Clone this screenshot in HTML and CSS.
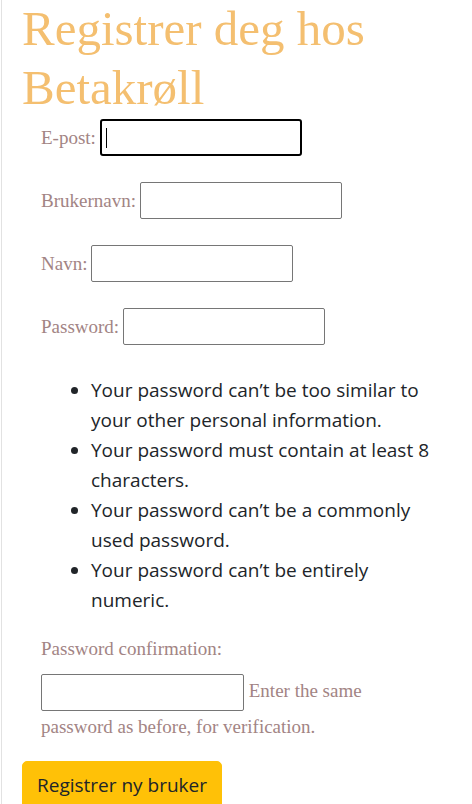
FILE: index.html
```html
<!DOCTYPE html>
<html lang="no">
<head>
<meta charset="utf-8">
<title>Registrer deg hos Betakrøll</title>
<link rel="stylesheet" href="styles.css">
</head>
<body>
<div class="page">
  <h1 class="title">Registrer deg hos Betakrøll</h1>
  <form class="form">
    <div class="fields">
      <p class="row"><label class="label" for="email">E-post:</label> <span class="focus-wrap"><input class="input input-focused" id="email" type="email"><span class="caret"></span></span></p>
      <p class="row"><label class="label" for="username">Brukernavn:</label> <input class="input" id="username" type="text"></p>
      <p class="row"><label class="label" for="name">Navn:</label> <input class="input" id="name" type="text"></p>
      <p class="row"><label class="label" for="pw1">Password:</label> <input class="input" id="pw1" type="password"></p>
      <ul class="rules">
        <li>Your password can’t be too similar to your other personal information.</li>
        <li>Your password must contain at least 8 characters.</li>
        <li>Your password can’t be a commonly used password.</li>
        <li>Your password can’t be entirely numeric.</li>
      </ul>
      <p class="row-label"><label class="label" for="pw2">Password confirmation:</label></p>
      <p class="confirm"><input class="input input-wide" id="pw2" type="password"> <span class="help">Enter the same password as before, for verification.</span></p>
    </div>
    <button class="btn" type="button">Registrer ny bruker</button>
  </form>
</div>
</body>
</html>
```
FILE: styles.css
```css
html, body {
  margin: 0;
  padding: 0;
  background: #fff;
}
body {
  font-family: "Liberation Serif", "DejaVu Serif", serif;
  overflow: hidden;
}
.page {
  margin-left: 1px;
  border-left: 1px solid #e2e2e2;
  min-height: 804px;
  padding-left: 20px;
  padding-right: 30px;
  box-sizing: border-box;
}
.title {
  margin: -1px 0 0 0;
  font-family: "Liberation Serif", serif;
  font-weight: 400;
  font-size: 49px;
  line-height: 59px;
  color: #f4bf70;
}
.form {
  margin: 0;
}
.fields {
  padding-left: 19px;
}
.row {
  margin: 2px 0 0 0;
  display: flex;
  align-items: center;
  gap: 4px;
  height: 37px;
}
.row + .row {
  margin-top: 26px;
}
.label {
  font-size: 19px;
  color: #a28484;
}
.input {
  width: 202px;
  height: 37px;
  box-sizing: border-box;
  border: 1px solid #767676;
  border-radius: 2px;
  margin: 0;
  padding: 0 4px;
  background: #fff;
  font: inherit;
}
.focus-wrap {
  position: relative;
  display: inline-block;
  height: 37px;
}
.input-focused {
  border: 2px solid #000;
  border-radius: 3px;
  outline: none;
}
.caret {
  position: absolute;
  left: 6px;
  top: 9px;
  width: 1px;
  height: 20px;
  background: #000;
}
.rules {
  margin: 30px 0 0 0;
  padding-left: 50px;
  font-family: "Open Sans", "Noto Sans", sans-serif;
  font-size: 19px;
  line-height: 30px;
  color: #212529;
}
.row-label {
  margin: 20px 0 0 0;
  line-height: 28px;
}
.confirm {
  margin: 10px 0 0 0;
  max-width: 380px;
  line-height: 32px;
  color: #a28484;
  font-size: 19px;
}
.input-wide {
  width: 203px;
  vertical-align: middle;
}
.help {
  font-size: 19px;
}
.btn {
  margin-top: 18px;
  display: block;
  background: #ffc107;
  border: 1px solid #ffc107;
  border-radius: 5px;
  padding: 8px 14px;
  font-family: "Open Sans", "Noto Sans", sans-serif;
  font-size: 19px;
  line-height: 30px;
  color: #212529;
}
```
